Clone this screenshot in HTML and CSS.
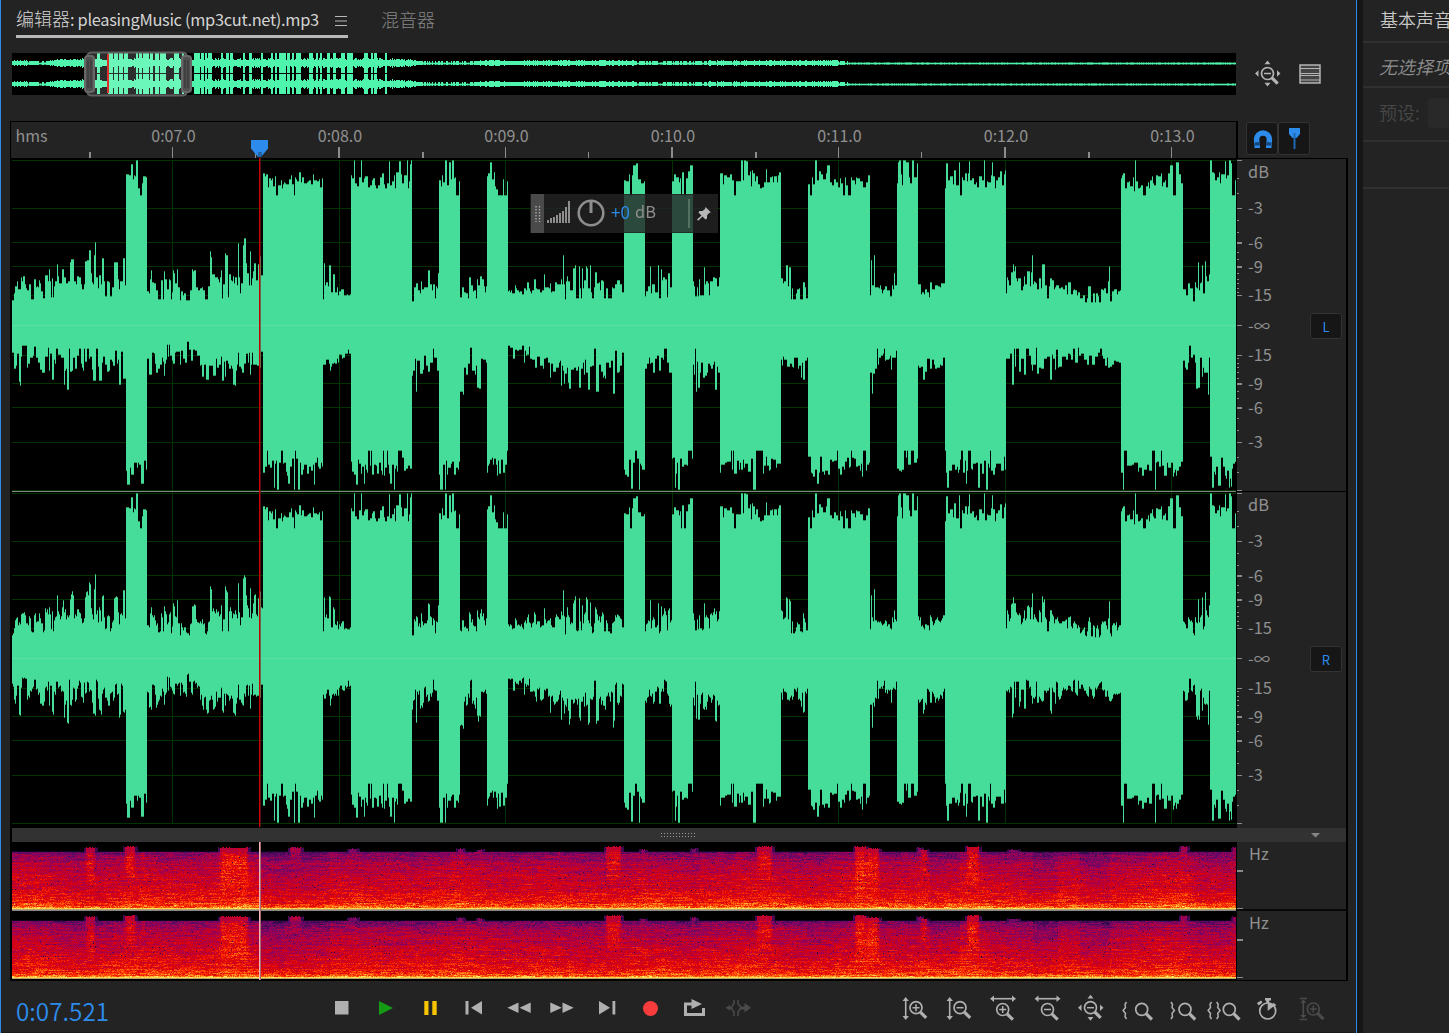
FILE: index.html
```html
<!DOCTYPE html>
<html lang="zh-CN">
<head>
<meta charset="utf-8">
<title>编辑器</title>
<link rel="stylesheet" href="styles.css">
</head>
<body>
<svg class="defs" width="0" height="0" aria-hidden="true">
  <defs>
    <g id="varrow"><path d="M0 2V21" stroke="currentColor" stroke-width="1.6"/><path d="M-3.2 4 0 0 3.2 4zM-3.2 19 0 23 3.2 19z" fill="currentColor"/></g>
    <g id="harrow"><path d="M2 0H24" stroke="currentColor" stroke-width="1.6"/><path d="M4-3.2 0 0 4 3.2zM22-3.2 26 0 22 3.2z" fill="currentColor"/></g>
    <g id="lens"><circle r="6" fill="none" stroke="currentColor" stroke-width="1.7"/><path d="M4.4 4.4 10.2 10.2" stroke="currentColor" stroke-width="3.2"/></g>
    <path id="minus" d="M-3.5 0H3.5" stroke="currentColor" stroke-width="1.5"/>
    <path id="plus" d="M-3.5 0H3.5M0-3.5V3.5" stroke="currentColor" stroke-width="1.5"/>
    <path id="brace" d="M4 0 2.500 2.500 3 5.500 .6 8.500 3 11.500 2.500 14.500 4 17" fill="none" stroke="currentColor" stroke-width="1.5"/>
    <g id="zoomfull"><use href="#lens"/><use href="#minus"/><path d="M-3-9.3 0-13 3-9.3zM-3 9.3 0 13 3 9.3zM-9-3.2-12.5 0-9 3.2zM9.500-3.2 13 0 9.500 3.2z" fill="currentColor"/></g>
  </defs>
</svg>
<div class="app">
  <main class="editor">
    <nav class="tabs">
      <div class="tab active"><span>编辑器<b>: pleasingMusic (mp3cut.net).mp3</b></span>
        <svg class="menu" width="13" height="12"><path d="M0 1.500H12M0 6H12M0 10.500H12" stroke="#b8b8b8" stroke-width="1.2"/></svg>
      </div>
      <div class="tab">混音器</div>
    </nav>

    <section class="overview">
      <div class="overview-wave">
        <canvas id="overview" width="1224" height="42"></canvas>
        <svg class="range" width="108" height="46" viewBox="0 0 108 46">
          <path d="M3 5Q4 1.500 8 1.500H98Q102 1.500 103 5M3 41Q4 44.500 8 44.500H98Q102 44.500 103 41" fill="none" stroke="#5f5f5f" stroke-width="2"/>
          <g fill="#505050" stroke="#686868" stroke-width="2"><rect x="1" y="5" width="9" height="36" rx="3"/><rect x="98" y="5" width="9" height="36" rx="3"/></g>
          <path d="M4 9V37M7 9V37M101 9V37M104 9V37" stroke="#333"/>
          <path d="M24 3V42" stroke="#e22d2d" stroke-width="2"/>
        </svg>
      </div>
      <div class="overview-tools">
        <svg width="28" height="30"><use href="#zoomfull" x="13.500" y="14.500"/></svg>
        <svg width="22" height="20"><path d="M1 1H21V19H1z" fill="#444" stroke="currentColor" stroke-width="1.500"/><path d="M1 4.500H21M1 9.500H21M1 11.500H21M1 16H21" stroke="currentColor" stroke-width="1"/></svg>
      </div>
    </section>

    <section class="ruler-row">
      <div class="ruler"><svg id="ruler" width="1225" height="36"></svg></div>
      <div class="toggles">
        <button><svg width="20" height="20" viewBox="0 0 20 20"><path d="M4.200 19V16Q3.600 13 3.600 10.500A6.400 6.400 0 0 1 16.400 10.500Q16.400 13 15.800 16V19" fill="none" stroke="#2d8ceb" stroke-width="5.500"/><path d="M1.500 13.500 6.500 13 7 16.500H2zM18.500 13.500 13.500 13 13 16.500H18z" fill="#14487c"/></svg></button>
        <button><svg width="14" height="24" viewBox="0 0 14 24"><path d="M1 1H12V7L8.500 11H4.500L1 7z" fill="#2d8ceb"/><path d="M6.500 6V22" stroke="#1d68b4" stroke-width="2"/></svg></button>
      </div>
    </section>

    <section class="frame">
      <div class="waves">
        <canvas id="waves" width="1224" height="669"></canvas>
        <svg class="axis" id="axis" width="109" height="669"></svg>
        <svg class="playhead" width="20" height="690"><path d="M1 1H18V9.500L11 18H8L1 9.500z" fill="#2d8ceb"/><path d="M9 13V18M11 13V18" stroke="#173f68" stroke-width="1"/><rect x="9" y="19" width="1" height="669" fill="#c80000"/><rect x="10" y="19" width="1" height="669" fill="#8c1414" opacity=".6"/></svg>
        <div class="hud">
          <div class="grip"><svg width="6" height="16"><path d="M1 0V16M4.500 0V16" stroke="#b0b0b0" stroke-width="1.300" stroke-dasharray="1.500 1.500"/></svg></div>
          <svg width="24" height="24" class="bars"><path d="M1 23V20M4 23V18M7 23V17M10 23V15M13 23V13M16 23V11M19 23V7M22 23V1" stroke="#b4b4b4" stroke-width="1.500"/></svg>
          <svg class="dial" width="30" height="30"><circle cx="15" cy="15" r="12.300" fill="none" stroke="#8e8e8e" stroke-width="2.600"/><path d="M15 3V15" stroke="#8e8e8e" stroke-width="3"/></svg>
          <span class="gain">+0</span><span class="unit">dB</span>
          <i class="rule"></i>
          <svg width="14" height="14" viewBox="0 0 14 14"><path d="M8.500 0 14 5.500 12 6 10 8.500 10 11.500 8.500 12.500 5.500 9.500 1.500 13.500 0 13 .5 12 4.500 8.500 1.500 5.500 2.500 4H5.500L8 2z" fill="#b8b8b8"/></svg>
        </div>
      </div>
      <div class="splitter">
        <svg class="dots" width="37" height="5"><path d="M0 .5H36M0 3.500H36" stroke="#999" stroke-width="1" stroke-dasharray="1 2"/></svg>
        <svg class="caret" width="10" height="5"><path d="M0 0H9L4.500 4.500z" fill="#858585"/></svg>
      </div>
      <div class="spectra">
        <canvas id="spectra" width="1224" height="138"></canvas>
        <svg class="axis" width="109" height="138"><path d="M0 29H6M0 98H6" stroke="#8a8a8a" stroke-width="2"/><path d="M0 66.500H6M0 135.500H6" stroke="#8a8a8a"/><path d="M0 68H109" stroke="#000" stroke-width="1.500"/><text x="12" y="18">Hz</text><text x="12" y="87">Hz</text></svg>
      </div>
    </section>

    <footer class="footer">
      <div class="timecode">0:07.521</div>
      <div class="transport">
        <svg viewBox="0 0 44 48"><path d="M15 16H28.500V29.500H15z" fill="currentColor"/></svg>
        <svg viewBox="0 0 44 48"><path d="M15 16 29 23 15 30z" fill="#149a14"/></svg>
        <svg viewBox="0 0 44 48"><path d="M16.300 16H20.500V30H16.300zM24.300 16H28.700V30H24.300z" fill="#f8c400"/></svg>
        <svg viewBox="0 0 44 48"><path d="M13.500 16H16.500V29.500H13.500zM30 16V29.500L19 22.700z" fill="currentColor"/></svg>
        <svg viewBox="0 0 44 48"><path d="M22.500 17.500V28L11.300 22.700zM34.700 17.500V28L23.500 22.700z" fill="currentColor"/></svg>
        <svg viewBox="0 0 44 48"><path d="M10.300 17.500V28L21.800 22.700zM22.500 17.500V28L33.700 22.700z" fill="currentColor"/></svg>
        <svg viewBox="0 0 44 48"><path d="M15 16V29.500L26 22.700zM28.500 16H31.300V29.500H28.500z" fill="currentColor"/></svg>
        <svg viewBox="0 0 44 48"><circle cx="22.500" cy="23.500" r="7.500" fill="#f83c3c"/></svg>
        <svg viewBox="0 0 44 48"><path d="M21 19H13.500V29.500H31.500V23" fill="none" stroke="currentColor" stroke-width="3"/><path d="M19.500 14 30 19 19.500 24z" fill="currentColor"/></svg>
        <svg viewBox="0 0 44 48" class="dim"><path d="M18 15V18.500L15 22.700 18 27V31M22 15V18.500L25 22.700 22 27V31" fill="none" stroke="currentColor" stroke-width="1.500"/><path d="M9.500 22.700 14 20V25.500zM13 22H16V24H13zM24 21.500H28.500V18L35 22.700 28.500 27.500V24.500H24z" fill="currentColor"/></svg>
      </div>
      <div class="zooms">
        <svg viewBox="0 0 44 48"><use href="#varrow" x="12.700" y="12"/><use href="#lens" x="23" y="22.700"/><use href="#plus" x="23" y="22.700"/></svg>
        <svg viewBox="0 0 44 48"><use href="#varrow" x="12.700" y="12"/><use href="#lens" x="23" y="22.700"/><use href="#minus" x="23" y="22.700"/></svg>
        <svg viewBox="0 0 44 48"><use href="#harrow" x="9" y="13.700"/><use href="#lens" x="21.700" y="24.500"/><use href="#plus" x="21.700" y="24.500"/></svg>
        <svg viewBox="0 0 44 48"><use href="#harrow" x="9.500" y="13.700"/><use href="#lens" x="22.500" y="24.500"/><use href="#minus" x="22.500" y="24.500"/></svg>
        <svg viewBox="0 0 44 48"><use href="#zoomfull" x="21.500" y="22.700"/></svg>
        <svg viewBox="0 0 44 48"><use href="#brace" x="9.500" y="17"/><use href="#lens" x="28.700" y="24.300"/></svg>
        <svg viewBox="0 0 44 48"><use href="#brace" transform="translate(18 17) scale(-1 1)"/><use href="#lens" x="28" y="24.300"/></svg>
        <svg viewBox="0 0 44 48"><use href="#brace" x="6.500" y="17"/><use href="#brace" transform="translate(19.700 17) scale(-1 1)"/><use href="#lens" x="28.300" y="24.300"/></svg>
        <svg viewBox="0 0 44 48"><circle cx="22.700" cy="26" r="8" fill="none" stroke="currentColor" stroke-width="1.700"/><path d="M22.700 26V18A8 8 0 0 1 29 21zM20 13H26V15.500H24.200V18H21.200V15.500H20zM12 18 16 15.500 17.500 17.500 13.500 20.500z" fill="currentColor"/><path d="M28 18.500 30.500 21" stroke="currentColor" stroke-width="2"/></svg>
        <svg viewBox="0 0 44 48" class="dim"><path d="M10.700 13.500H18M10.700 34.500H18" stroke="currentColor" stroke-width="1.500"/><g transform="translate(14.300 14.500) scale(1 .82)"><use href="#varrow"/></g><use href="#lens" x="24.300" y="24"/><use href="#plus" x="24.300" y="24"/></svg>
      </div>
    </footer>
  </main>
  <aside class="side">
    <h2>基本声音</h2>
    <p class="selection">无选择项</p>
    <div class="preset"><label>预设:</label><span class="field"></span></div>
    <div class="blank"></div>
  </aside>
</div>
<script src="script.js"></script>
</body>
</html>
```

FILE: styles.css
```css
* { box-sizing: border-box; }
body {
  margin: 0;
  background: #161616;
  color: #b4b4b4;
  font-family: "Noto Sans CJK SC", "Noto Sans", sans-serif;
  overflow: hidden;
}
svg, canvas { display: block; flex: none; }
.defs { position: absolute; }
.app {
  display: grid;
  grid-template-columns: 1357px 1fr;
  column-gap: 6px;
  width: 1449px;
  height: 1033px;
  overflow: hidden;
}
.editor {
  display: flex;
  flex-direction: column;
  background: #232323;
  border: solid #2d8ceb;
  border-width: 0 1px;
}

.tabs { display: flex; height: 38px; padding-left: 15px; gap: 33px; font-size: 18px; line-height: 38px; white-space: nowrap; color: #858585; font-weight: 300; }
.tab { height: 38px; }
.tab.active { display: flex; align-items: center; justify-content: space-between; width: 332px; border-bottom: 3px solid #b8b8b8; color: #d4d4d4; font-weight: 400; }
.tab.active span { height: 38px; font-weight: 300; }
.tab.active b { font-size: 16.4px; font-weight: 400; letter-spacing: -.31px; }
.menu { margin-top: 7px; }

.overview { display: flex; align-items: center; height: 42px; margin: 15px 0 0 11px; }
.overview-wave { position: relative; width: 1224px; height: 42px; background: #000; }
.range { position: absolute; left: 72px; top: -2px; }
.overview-tools { display: flex; align-items: center; gap: 17px; margin-left: 18px; }

.ruler-row { display: flex; height: 37px; margin: 26px 0 0 9px; }
.ruler { width: 1228px; border: solid #000; border-width: 1px 2px 0 1px; }
.ruler text { font-size: 16px; fill: #909090; }
.toggles { display: flex; margin: 1px 0 0 8px; height: 33px; }
.toggles button {
  display: flex; align-items: center; justify-content: center;
  width: 32px; height: 33px; padding: 1px 0 0 1px;
  background: #161616; border: 1px solid #333; border-radius: 3px;
}

.frame {
  display: flex; flex-direction: column;
  width: 1338px; height: 823px; margin-left: 9px;
  background: #000;
  border: 1px solid #000; border-right-width: 2px; border-left-width: 2px;
}
.waves, .spectra { position: relative; display: flex; justify-content: space-between; }
.axis { background: #232323; }
.axis text { font-size: 16.4px; fill: #909090; }
.axis .channel { fill: #2d8ceb; font-size: 13px; }
.playhead { position: absolute; left: 238px; top: -20px; overflow: visible; }
.splitter { display: flex; align-items: center; height: 14px; background: #323232; padding: 0 25px 0 649px; justify-content: space-between; }

.hud {
  position: absolute; left: 518px; top: 35px;
  display: flex; align-items: center;
  width: 188px; height: 39px;
  background: rgba(36, 36, 36, .8);
  border: 1px solid rgba(30, 30, 30, .6);
  font-size: 17px;
}
.grip { display: flex; align-items: center; justify-content: center; width: 13px; height: 39px; background: #4a4a4a; }
.bars { margin: -4px 0 0 3px; }
.dial { margin: -2px 0 0 5px; }
.gain { color: #2d8ceb; margin: -5px 0 0 5px; width: 24px; }
.unit { color: #8e8e8e; margin-top: -5px; width: 53px; font-size: 16.4px; }
.rule { width: 2px; height: 29px; background: #537062; margin-right: 7px; }

.footer { display: flex; height: 52px; padding: 4px 0 0 15px; border-bottom: 1px solid #1c1719; }
.timecode { width: 304px; color: #2d8ceb; font-size: 24.3px; line-height: 52px; height: 48px; font-weight: 350; }
.transport, .zooms { display: flex; color: #b0b0b0; }
.transport svg, .zooms svg { width: 44px; height: 48px; }
.zooms { margin-left: 133px; }
.transport .dim, .zooms .dim { color: #4a4a4a; }

.side { background: #232323; white-space: nowrap; overflow: hidden; }
.side h2 { height: 43px; margin: 0; padding-left: 17px; font-size: 18px; line-height: 38px; font-weight: 350; color: #c8c8c8; border-bottom: 2px solid #303030; }
.side .selection { height: 45px; margin: 0; padding-left: 16px; font-size: 18px; line-height: 46px; font-style: italic; font-weight: 350; color: #909090; border-bottom: 2px solid #303030; }
.preset { display: flex; align-items: center; gap: 8px; height: 54px; padding: 0 0 2px 16px; font-size: 18px; font-weight: 350; color: #484848; border-bottom: 2px solid #303030; }
.preset label { width: 41px; margin-top: -3px; }
.field { width: 60px; height: 30px; background: #292929; border-radius: 4px; }
.blank { height: 47px; border-bottom: 2px solid #303030; }
```

FILE: script.js
```javascript
(function () {
  var seed = 7;
  function rnd() {
    seed = (seed * 1664525 + 1013904223) >>> 0;
    return seed / 4294967296;
  }
  var NS = 'http://www.w3.org/2000/svg';
  function add(parent, name, attrs, text) {
    var el = document.createElementNS(NS, name);
    for (var k in attrs) el.setAttribute(k, attrs[k]);
    if (text) el.textContent = text;
    parent.appendChild(el);
  }

  // Time ruler: one label per second, a short tick on each half second.
  var ruler = document.getElementById('ruler');
  add(ruler, 'text', { x: 4.5, y: 20 }, 'hms');
  for (var s = 0; s < 7; s++) {
    var rx = 161.2 + s * 166.5;
    add(ruler, 'text', { x: rx + 1.3, y: 20, 'text-anchor': 'middle' }, '0:' + ('0' + (7 + s)).slice(-2) + '.0');
    add(ruler, 'rect', { x: Math.floor(rx), y: 25, width: s % 2 ? 2 : 1, height: 11, fill: '#8c8c8c' });
    add(ruler, 'rect', { x: Math.floor(rx - 83), y: 30, width: s % 2 ? 1 : 2, height: 6, fill: '#8c8c8c' });
  }

  // Loud passages, in page pixels.
  var blocks = [[126,147],[263,323],[351,412],[439,460],[487,508],[624,645],[672,693],[720,781],[808,870],[897,918],[945,1006],[1121,1183],[1210,1236]];
  // Quiet passages: x, low and high reach above the axis, low and high reach below it.
  var quiet = [[12,28,56,24,56],[60,32,60,28,60],[95,32,66,28,58],[124,34,62,30,55],[148,30,58,26,46],[190,28,55,20,50],[225,32,70,30,54],[245,38,80,32,60],[262,34,70,30,54],
    [324,30,60,30,52],[350,27,34,22,38],[412,28,58,28,62],[439,30,54,28,56],[460,30,46,26,68],[486,28,48,30,60],[508,29,38,20,32],[535,30,44,26,46],[563,30,60,32,60],[600,30,54,28,64],[624,30,56,32,64],
    [645,27,56,28,52],[672,32,54,26,46],[693,32,56,28,62],[720,34,60,34,66],[781,28,56,28,54],[808,30,54,28,54],[870,34,70,30,68],[882,30,42,26,46],[897,32,54,28,40],[918,30,40,30,54],[945,30,52,30,50],
    [1006,34,54,28,54],[1035,30,66,28,68],[1055,30,50,28,52],[1085,24,36,26,52],[1110,26,44,28,56],[1121,28,44,28,50],[1182,26,44,24,54],[1209,30,68,28,66]];
  var spikes = [[89,75],[90,75],[95,83],[210,74],[225,72],[238,82],[243,80],[250,74],[563,70],[579,59],[650,59],[704,58],[874,70],[1032,70],[1044,61],[1109,59],[1198,63],[1205,64]];

  function between(x) {
    var i = 0;
    while (i < quiet.length - 2 && quiet[i + 1][0] < x) i++;
    var a = quiet[i], b = quiet[i + 1], t = Math.min(1, (x - a[0]) / (b[0] - a[0]));
    return [1, 2, 3, 4].map(function (k) { return a[k] + (b[k] - a[k]) * t; });
  }
  function inBlock(x) {
    return blocks.some(function (b) { return x >= b[0] && x < b[1]; });
  }
  // Mostly middling values, now and then a tall peak or a deep notch.
  function reach(low, high, drift) {
    var r = rnd(), v = rnd() * .55 + drift * .2;
    if (r < .14) v = .85 + rnd() * .35;
    else if (r < .24) v = -.12;
    return low + (high - low) * v;
  }
  function profile() {
    var out = [], up = 0, down = 0, nu = 0, nd = 0, drift = .5, was;
    for (var x = 12; x < 1236; x++) {
      var loud = inBlock(x), q = between(x);
      if (loud !== was) nu = nd = 0;
      was = loud;
      if (x % 9 === 0) drift = rnd();
      if (nu-- <= 0) {
        up = loud ? reach(134, 164, drift) : reach(q[0], q[1], drift);
        nu = Math.floor(rnd() * 2.3);
      }
      if (nd-- <= 0) {
        down = loud ? reach(130, 163, 1 - drift) : reach(q[2], q[3], 1 - drift);
        nd = Math.floor(rnd() * 2.3);
      }
      var u = up;
      spikes.forEach(function (p) { if (x === p[0]) u = p[1]; });
      out.push([Math.round(u), Math.round(down)]);
    }
    return out;
  }

  var wave = profile();
  var c = document.getElementById('waves').getContext('2d');
  c.fillStyle = '#000';
  c.fillRect(0, 0, 1224, 669);
  var lines = [1, 49, 83, 107, 136, 166, 196, 224, 248, 283, 331];
  c.fillStyle = '#003300';
  [160, 327, 493, 660, 826, 993, 1159].forEach(function (x) { c.fillRect(x, 1, 1, 664); });
  [0, 333].forEach(function (o) {
    lines.forEach(function (y) { c.fillRect(0, y + o, 1224, 1); });
  });
  [0, 333].forEach(function (o) {
    wave.forEach(function (w, x) {
      var u = w[0], d = w[1];
      if (o && !inBlock(x + 12)) {
        u = Math.round(u * (.91 + rnd() * .13));
        d = Math.round(d * (.91 + rnd() * .13));
      }
      u = Math.min(u, 165); d = Math.min(d, 165);
      c.fillStyle = '#2a9c62';
      c.fillRect(x, o + 166 - u, 1, u + d);
      c.fillStyle = '#46dc99';
      c.fillRect(x, o + 167 - u, 1, u + d - 2);
    });
    c.fillStyle = '#5be0a2';
    c.fillRect(0, o + 166, 1224, 1);
  });
  c.fillStyle = '#858585';
  c.fillRect(0, 332, 1224, 1);

  // Level scale, once per channel.
  var axis = document.getElementById('axis');
  var minor = [19, 34, 61, 73, 93, 100, 114, 120, 124, 129, 133, 199, 204, 208, 213, 219, 232, 239, 259, 271, 298, 313];
  var labels = [[13,'dB'],[49,'-3'],[84,'-6'],[108,'-9'],[136,'-15'],[167,'-∞'],[196,'-15'],[225,'-9'],[249,'-6'],[283,'-3']];
  [0, 333].forEach(function (o, i) {
    lines.forEach(function (y, k) { add(axis, 'rect', { x: 0, y: y + o, width: 5, height: [2, 3, 7, 8].indexOf(k) >= 0 ? 2 : 1, fill: '#8a8a8a' }); });
    minor.forEach(function (y) { add(axis, 'rect', { x: 0, y: y + o, width: 2, height: 1, fill: '#8a8a8a' }); });
    labels.forEach(function (l) { add(axis, 'text', { x: 11, y: l[0] + o + 6 }, l[1]); });
    add(axis, 'rect', { x: 73.5, y: 154.5 + o, width: 31, height: 25, rx: 2, fill: '#161616', stroke: '#333' });
    add(axis, 'text', { x: 89, y: 173 + o, 'text-anchor': 'middle', 'class': 'channel' }, 'LR'[i]);
  });
  add(axis, 'rect', { x: 0, y: 332, width: 109, height: 1, fill: '#000' });

  // Whole-file overview.
  var g = document.getElementById('overview').getContext('2d');
  var peaks = [[97,100],[108,113],[114,118],[119,123],[124,128],[136,138],[139,142],[143,149],[150,153],[155,159],[160,166],[174,179],[182,184],
    [194,200],[201,204],[205,207],[208,212],[221,223],[226,229],[230,233],[243,245],[249,252],[261,263],[271,273],[275,277],[279,286],[287,290],[292,294],[296,301],
    [309,313],[316,318],[320,322],[327,330],[333,336],[341,345],[347,353],[364,368],[371,373],[374,377],[385,387]];
  var env = [[12,2.6],[45,1.6],[60,3.6],[90,4],[190,4],[385,4],[410,3],[425,1.4],[465,1.4],[485,2.6],[500,3],[515,2.2],[560,2.6],[620,2.4],[660,1.8],[720,2.2],[800,2.4],[835,2.6],[850,1],[1236,1]];
  g.fillStyle = '#000';
  g.fillRect(0, 0, 1224, 42);
  g.fillStyle = 'rgb(45,45,45)';
  g.fillRect(77, 0, 98, 42);
  for (var x = 12; x < 1236; x++) {
    var e = 0;
    while (e < env.length - 2 && env[e + 1][0] < x) e++;
    var amp = env[e][1] + (env[e + 1][1] - env[e][1]) * (x - env[e][0]) / (env[e + 1][0] - env[e][0]);
    var full = peaks.some(function (p) { return x >= p[0] && x < p[1]; });
    var h = full ? 10 : Math.max(1, Math.round(amp * (.65 + rnd() * .6)));
    g.fillStyle = x >= 89 && x < 187 ? '#6cf7ba' : '#50f5ad';
    [10, 31].forEach(function (cy) {
      if (h > 1) {
        g.fillRect(x - 12, cy - h, 1, h * 2);
      } else {
        g.fillRect(x - 12, cy, 1, 1);
        g.globalAlpha = rnd() < .4 ? .6 : .3;
        g.fillRect(x - 12, cy - 1, 1, 3);
        g.globalAlpha = 1;
      }
    });
  }

  // Spectrogram: heat rises towards the low frequencies at the bottom.
  var sc = document.getElementById('spectra').getContext('2d');
  var img = sc.createImageData(1224, 138);
  var ramp = [[0,0,0,0],[.15,22,8,50],[.34,95,10,105],[.46,150,0,90],[.57,190,0,50],[.68,220,0,8],[.79,255,50,0],[.88,255,125,20],[.95,255,180,60],[1,255,240,95]];
  function color(v) {
    v = Math.max(0, Math.min(1, v));
    var i = 0;
    while (i < ramp.length - 2 && ramp[i + 1][0] < v) i++;
    var a = ramp[i], b = ramp[i + 1], t = (v - a[0]) / (b[0] - a[0]);
    return [1, 2, 3].map(function (k) { return a[k] + (b[k] - a[k]) * t; });
  }
  // x range, strength, height of the bloom over the band, reach down the band.
  var hot = [[86,95,.2,5,.7],[125,135,.22,6,.45],[141,145,.15,0,.3],[220,248,.22,5,.7],[290,301,.16,5,.2],[349,357,.03,4,.1],[458,463,.05,4,.1],[478,482,.05,3,.1],[606,621,.24,6,.5],
    [641,645,.03,3,.1],[692,696,.04,4,.1],[757,772,.22,6,.5],[855,866,.24,6,.8],[866,879,.22,4,.8],[918,921,.05,5,.1],[921,927,.2,3,.4],[967,979,.25,6,.6],[1009,1018,.03,3,.05],[1181,1187,.12,6,.08],[1233,1236,.1,5,.3]];
  var cool = [[259,285,.09],[285,330,.05],[410,450,.03],[648,700,.04],[930,960,.06],[1033,1058,.07],[1080,1110,.06],[1190,1230,.03]];
  var heat = [[0,.38],[.06,.44],[.16,.52],[.35,.57],[.5,.61],[.65,.65],[.78,.69],[.88,.74],[.93,.8],[.97,.9],[1,.94]];
  function base(t) {
    var i = 0;
    while (i < heat.length - 2 && heat[i + 1][0] < t) i++;
    return heat[i][1] + (heat[i + 1][1] - heat[i][1]) * (t - heat[i][0]) / (heat[i + 1][0] - heat[i][0]);
  }
  [0, 69].forEach(function (o) {
    var streak = 0;
    for (var y = 0; y < 67; y++) {
      var row = (rnd() - .5) * .06;
      for (var x = 0; x < 1224; x++) {
        var px = x + 12, t = (y - 9) / 57, v;
        if (rnd() < .16) streak = (rnd() - .5) * .16;
        if (t < 0) {
          v = y === 8 ? .1 : 0;
          hot.forEach(function (h) {
            var spread = (10 - y) * .35;
            if (h[3] && px >= h[0] - 3 + spread * .4 && px < h[1] + 3 - spread * .4 && y >= 10 - h[3] - (rnd() < .4 ? 1 : 0)) {
              var inner = px >= h[0] && px < h[1];
              v = Math.max(v, (inner ? .37 + h[2] * .9 : .25) + (rnd() - .5) * .14);
            }
          });
        } else {
          v = base(t) + row + streak + (rnd() - .5) * .17;
          hot.forEach(function (h) {
            if (px >= h[0] - 1 && px < h[1] + 1 && t < h[4]) {
              var side = Math.min(1, (px - h[0] + 2) / 4, (h[1] + 1 - px) / 4);
              v += h[2] * (1 - t / h[4] * .85) * side * (.8 + rnd() * .4);
            }
          });
          cool.forEach(function (h) {
            if (px >= h[0] && px < h[1]) v -= h[2] * (1 - t * .7);
          });
          v += .03 * Math.sin(px / 23 + 1) * Math.sin(px / 57);
          if (t < .7 && rnd() < .007) v = .22;
          if (y === 65) v = .98 + (rnd() - .5) * .06;
        }
        var rgb = y === 66 ? [185, 160, 105] : color(v);
        var p = ((y + o + 1) * 1224 + x) * 4;
        img.data[p] = rgb[0]; img.data[p + 1] = rgb[1]; img.data[p + 2] = rgb[2]; img.data[p + 3] = 255;
      }
    }
  });
  sc.putImageData(img, 0, 0);
  sc.fillStyle = '#858585';
  sc.fillRect(0, 68, 1224, 1);
  sc.fillStyle = '#f2b6b6';
  sc.fillRect(247, 0, 1, 138);
  sc.fillStyle = '#a86a70';
  sc.fillRect(248, 0, 1, 138);
})();
```
